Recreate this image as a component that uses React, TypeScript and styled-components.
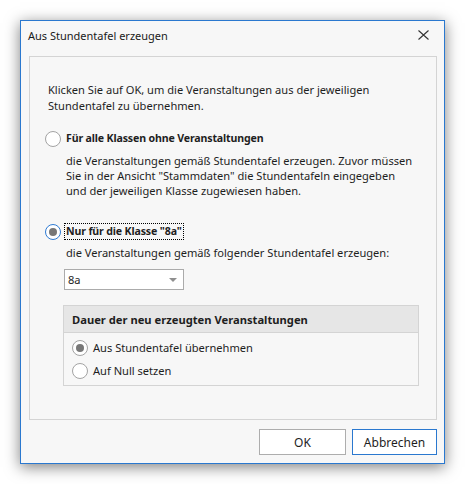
import React from "react";
import styled, { createGlobalStyle } from "styled-components";

const Global = createGlobalStyle`
  html, body { margin: 0; padding: 0; background: #ffffff; }
  body { font-family: "Noto Sans", "Open Sans", "Liberation Sans", sans-serif; font-size: 11.1px; color: #1e1e1e; }
  * { box-sizing: border-box; }
`;

const Stage = styled.div`
  padding: 20px 0 0 20px;
  width: 465px;
  height: 484px;
`;

const Window = styled.div`
  width: 425px;
  height: 444px;
  border: 1px solid #2a78cf;
  background: #f7f7f7;
  box-shadow: 0 3px 14px rgba(0, 0, 0, 0.5);
  display: flex;
  flex-direction: column;
`;

const TitleBar = styled.div`
  height: 28px;
  display: flex;
  align-items: center;
  justify-content: space-between;
  padding: 1px 15px 0 7px;
  font-size: 11px;
  color: #1a1a1a;
`;

const CloseBtn = styled.div`
  width: 11px;
  height: 10px;
  display: flex;
  align-items: center;
  justify-content: center;
  svg { display: block; }
`;

const Body = styled.div`
  flex: 1;
  display: flex;
  flex-direction: column;
  padding: 8px 7px 8px 8px;
`;

const Panel = styled.div`
  height: 364px;
  border: 1px solid #d4d4d4;
  padding: 25px 10px 0 18px;
  display: flex;
  flex-direction: column;
  white-space: nowrap;
`;

const Para = styled.p<{ $indent?: number; $mt?: number; $lh: number }>`
  margin: ${(p) => p.$mt ?? 0}px 0 0 ${(p) => p.$indent ?? 0}px;
  line-height: ${(p) => p.$lh}px;
`;

const RadioRow = styled.label<{ $mt: number; $ml?: number }>`
  display: flex;
  align-items: center;
  gap: 3px;
  margin: ${(p) => p.$mt}px 0 0 ${(p) => p.$ml ?? -3}px;
  height: 17px;
`;

const RadioCircle = styled.span<{ $checked?: boolean; $focus?: boolean }>`
  width: 16px;
  height: 16px;
  border-radius: 50%;
  border: 1px solid ${(p) => (p.$focus ? "#2f7bd3" : "#a3a3a3")};
  background: #ffffff;
  display: flex;
  align-items: center;
  justify-content: center;
  flex: none;
  &::after {
    content: "";
    width: 8px;
    height: 8px;
    border-radius: 50%;
    background: ${(p) => (p.$checked ? "#777777" : "transparent")};
  }
`;

const RadioLabel = styled.span<{ $bold?: boolean; $focus?: boolean }>`
  font-weight: ${(p) => (p.$bold ? 700 : 400)};
  font-size: ${(p) => (p.$bold ? "10.6px" : "inherit")};
  letter-spacing: ${(p) => (p.$bold ? "-0.15px" : "normal")};
  padding: 0 1px;
  margin-left: 1px;
  outline: ${(p) => (p.$focus ? "1px dotted #000" : "none")};
  line-height: 15px;
`;

const Select = styled.div`
  margin: 9px 0 0 16px;
  width: 120px;
  height: 21px;
  border: 1px solid #ababab;
  background: #ffffff;
  display: flex;
  align-items: center;
  justify-content: space-between;
  padding: 0 6px 0 3px;
`;

const Caret = styled.span`
  width: 0;
  height: 0;
  border-left: 4px solid transparent;
  border-right: 4px solid transparent;
  border-top: 4px solid #8f8f8f;
`;

const Group = styled.div`
  margin: 15px 0 0 15px;
  width: 356px;
  border: 1px solid #d4d4d4;
`;

const GroupHeader = styled.div`
  height: 27px;
  background: #e6e6e6;
  border-bottom: 1px solid #d4d4d4;
  display: flex;
  align-items: center;
  padding-left: 8px;
  font-weight: 700;
  font-size: 11.2px;
`;

const GroupBody = styled.div`
  display: flex;
  flex-direction: column;
  gap: 6px;
  padding: 6px 0 6px 8px;
`;

const Footer = styled.div`
  margin-top: 9px;
  display: flex;
  justify-content: flex-end;
  gap: 6px;
`;

const Button = styled.button<{ $primary?: boolean }>`
  width: ${(p) => (p.$primary ? 85 : 87)}px;
  height: 26px;
  font: inherit;
  font-size: 12px;
  color: #1e1e1e;
  background: #ffffff;
  border: 1px solid ${(p) => (p.$primary ? "#2a78cf" : "#adadad")};
  padding: 0;
`;

export default function App() {
  return (
    <>
      <Global />
      <Stage>
        <Window>
          <TitleBar>
            <span>Aus Stundentafel erzeugen</span>
            <CloseBtn>
              <svg width="11" height="10" viewBox="0 0 11 10">
                <path d="M0.5 0.5 L10.5 9.5 M10.5 0.5 L0.5 9.5" stroke="#333" strokeWidth="1.1" fill="none" />
              </svg>
            </CloseBtn>
          </TitleBar>
          <Body>
            <Panel>
              <Para $lh={16}>
                Klicken Sie auf OK, um die Veranstaltungen aus der jeweiligen
                <br />
                Stundentafel zu übernehmen.
              </Para>
              <RadioRow $mt={16}>
                <RadioCircle />
                <RadioLabel $bold>Für alle Klassen ohne Veranstaltungen</RadioLabel>
              </RadioRow>
              <Para $indent={18} $mt={6} $lh={15}>
                die Veranstaltungen gemäß Stundentafel erzeugen. Zuvor müssen
                <br />
                Sie in der Ansicht "Stammdaten" die Stundentafeln eingegeben
                <br />
                und der jeweiligen Klasse zugewiesen haben.
              </Para>
              <RadioRow $mt={25}>
                <RadioCircle $checked $focus />
                <RadioLabel $bold $focus>Nur für die Klasse "8a"</RadioLabel>
              </RadioRow>
              <Para $indent={18} $mt={5} $lh={15}>
                die Veranstaltungen gemäß folgender Stundentafel erzeugen:
              </Para>
              <Select>
                <span>8a</span>
                <Caret />
              </Select>
              <Group>
                <GroupHeader>Dauer der neu erzeugten Veranstaltungen</GroupHeader>
                <GroupBody>
                  <RadioRow $mt={0} $ml={0}>
                    <RadioCircle $checked />
                    <RadioLabel>Aus Stundentafel übernehmen</RadioLabel>
                  </RadioRow>
                  <RadioRow $mt={0} $ml={0}>
                    <RadioCircle />
                    <RadioLabel>Auf Null setzen</RadioLabel>
                  </RadioRow>
                </GroupBody>
              </Group>
            </Panel>
            <Footer>
              <Button>OK</Button>
              <Button $primary>Abbrechen</Button>
            </Footer>
          </Body>
        </Window>
      </Stage>
    </>
  );
}
